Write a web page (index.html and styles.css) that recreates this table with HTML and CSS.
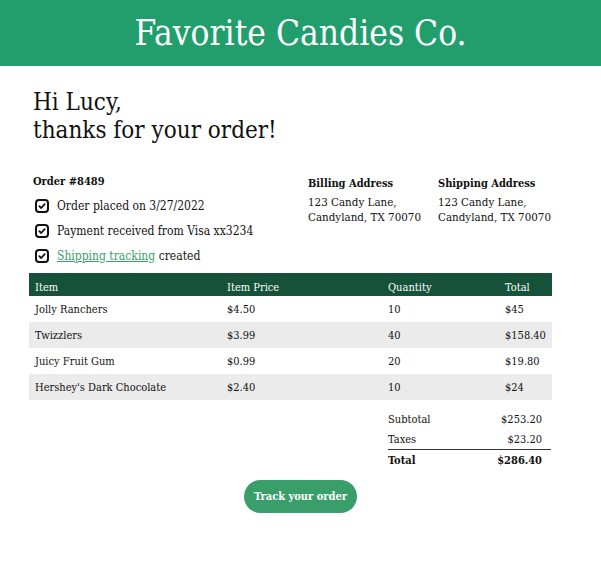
FILE: index.html
```html
<!DOCTYPE html>
<html lang="en">
<head>
    <meta charset="UTF-8">
    <meta name="viewport" content="width=device-width, initial-scale=1.0">
    <title>Order Confirmation</title>
    <link rel="stylesheet" href="styles.css">
</head>
<body>
    <header class="banner">
        <h1>Favorite Candies Co.</h1>
    </header>

    <main class="content">
        <h2 class="greeting">Hi Lucy,<br>thanks for your order!</h2>

        <section class="summary">
            <div class="order-info">
                <h3>Order #8489</h3>
                <ul class="steps">
                    <li><span class="check"><svg viewBox="0 0 14 14" width="14" height="14"><rect x="1" y="1" width="12" height="12" rx="3" fill="none" stroke="#111" stroke-width="2"/><path d="M4.3 7.2 L6.2 9 L9.7 5.2" fill="none" stroke="#111" stroke-width="1.8" stroke-linecap="round" stroke-linejoin="round"/></svg></span>Order placed on 3/27/2022</li>
                    <li><span class="check"><svg viewBox="0 0 14 14" width="14" height="14"><rect x="1" y="1" width="12" height="12" rx="3" fill="none" stroke="#111" stroke-width="2"/><path d="M4.3 7.2 L6.2 9 L9.7 5.2" fill="none" stroke="#111" stroke-width="1.8" stroke-linecap="round" stroke-linejoin="round"/></svg></span>Payment received from Visa xx3234</li>
                    <li><span class="check"><svg viewBox="0 0 14 14" width="14" height="14"><rect x="1" y="1" width="12" height="12" rx="3" fill="none" stroke="#111" stroke-width="2"/><path d="M4.3 7.2 L6.2 9 L9.7 5.2" fill="none" stroke="#111" stroke-width="1.8" stroke-linecap="round" stroke-linejoin="round"/></svg></span><a href="#">Shipping tracking</a>&nbsp;created</li>
                </ul>
            </div>
            <div class="address">
                <h4>Billing Address</h4>
                <p>123 Candy Lane,<br>Candyland, TX 70070</p>
            </div>
            <div class="address">
                <h4>Shipping Address</h4>
                <p>123 Candy Lane,<br>Candyland, TX 70070</p>
            </div>
        </section>

        <table class="items">
            <colgroup>
                <col class="c-item">
                <col class="c-price">
                <col class="c-qty">
                <col class="c-total">
            </colgroup>
            <thead>
                <tr>
                    <th>Item</th>
                    <th>Item Price</th>
                    <th>Quantity</th>
                    <th>Total</th>
                </tr>
            </thead>
            <tbody>
                <tr><td>Jolly Ranchers</td><td>$4.50</td><td>10</td><td>$45</td></tr>
                <tr><td>Twizzlers</td><td>$3.99</td><td>40</td><td>$158.40</td></tr>
                <tr><td>Juicy Fruit Gum</td><td>$0.99</td><td>20</td><td>$19.80</td></tr>
                <tr><td>Hershey's Dark Chocolate</td><td>$2.40</td><td>10</td><td>$24</td></tr>
            </tbody>
        </table>

        <div class="totals">
            <div class="total-row"><span>Subtotal</span><span>$253.20</span></div>
            <div class="total-row"><span>Taxes</span><span>$23.20</span></div>
            <div class="total-row grand"><span>Total</span><span>$286.40</span></div>
        </div>
    </main>

    <div class="actions">
        <a class="track-btn" href="#">Track your order</a>
    </div>
</body>
</html>
```

FILE: styles.css
```css
body {
    margin: 0;
    font-family: "DejaVu Serif Condensed", "Liberation Serif", serif;
    font-stretch: condensed;
    color: #111;
    background: #fff;
}
.banner {
    background-color: #229e6c;
    height: 66px;
    display: flex;
    align-items: center;
    justify-content: center;
}
.banner h1 {
    margin: 0;
    color: #fff;
    font-weight: normal;
    font-size: 35px;
}
.content {
    width: 523px;
    margin-left: 29px;
}
.greeting {
    margin: 22px 0 0 4px;
    font-weight: normal;
    font-size: 24px;
    line-height: 28px;
}
.summary {
    display: flex;
    margin-top: 30px;
}
.order-info {
    flex: none;
    width: 275px;
    padding-left: 4px;
}
.order-info h3 {
    margin: 0;
    font-size: 11px;
    line-height: 16px;
}
.steps {
    list-style: none;
    margin: 3px 0 0;
    padding: 0;
}
.steps li {
    display: flex;
    align-items: center;
    height: 25px;
    font-size: 12px;
}
.check {
    display: flex;
    margin: 0 8px 0 2px;
}
.steps a {
    color: #3a9e6d;
}
.address {
    flex: none;
    width: 130px;
    padding-top: 2px;
}
.address:last-child {
    width: 114px;
}
.address h4 {
    margin: 0;
    font-size: 11px;
    line-height: 16px;
}
.address p {
    margin: 3px 0 0;
    font-size: 11.5px;
    line-height: 15px;
}
.items {
    width: 523px;
    margin-top: 5px;
    border-collapse: collapse;
    font-size: 11px;
}
.c-item { width: 192px; }
.c-price { width: 161px; }
.c-qty { width: 117px; }
.c-total { width: 53px; }
.items th {
    background-color: #155239;
    color: #fff;
    font-weight: normal;
    text-align: left;
    height: 17px;
    padding: 6px 6px 0;
}
.items td {
    height: 26px;
    padding: 0 6px;
}
.items tbody tr:nth-child(even) {
    background-color: #ebebeb;
}
.totals {
    width: 163px;
    margin: 9px 0 0 359px;
    font-size: 11px;
}
.total-row {
    display: flex;
    justify-content: space-between;
    height: 20px;
    align-items: center;
    padding-right: 9px;
}
.total-row.grand {
    border-top: 1px solid #333;
    font-weight: bold;
}
.actions {
    display: flex;
    justify-content: center;
    margin-top: 10px;
}
.track-btn {
    background-color: #3a9e6b;
    color: #fff;
    text-decoration: none;
    font-weight: bold;
    font-size: 11px;
    padding: 0 10px;
    height: 33px;
    line-height: 33px;
    border-radius: 17px;
}
```
